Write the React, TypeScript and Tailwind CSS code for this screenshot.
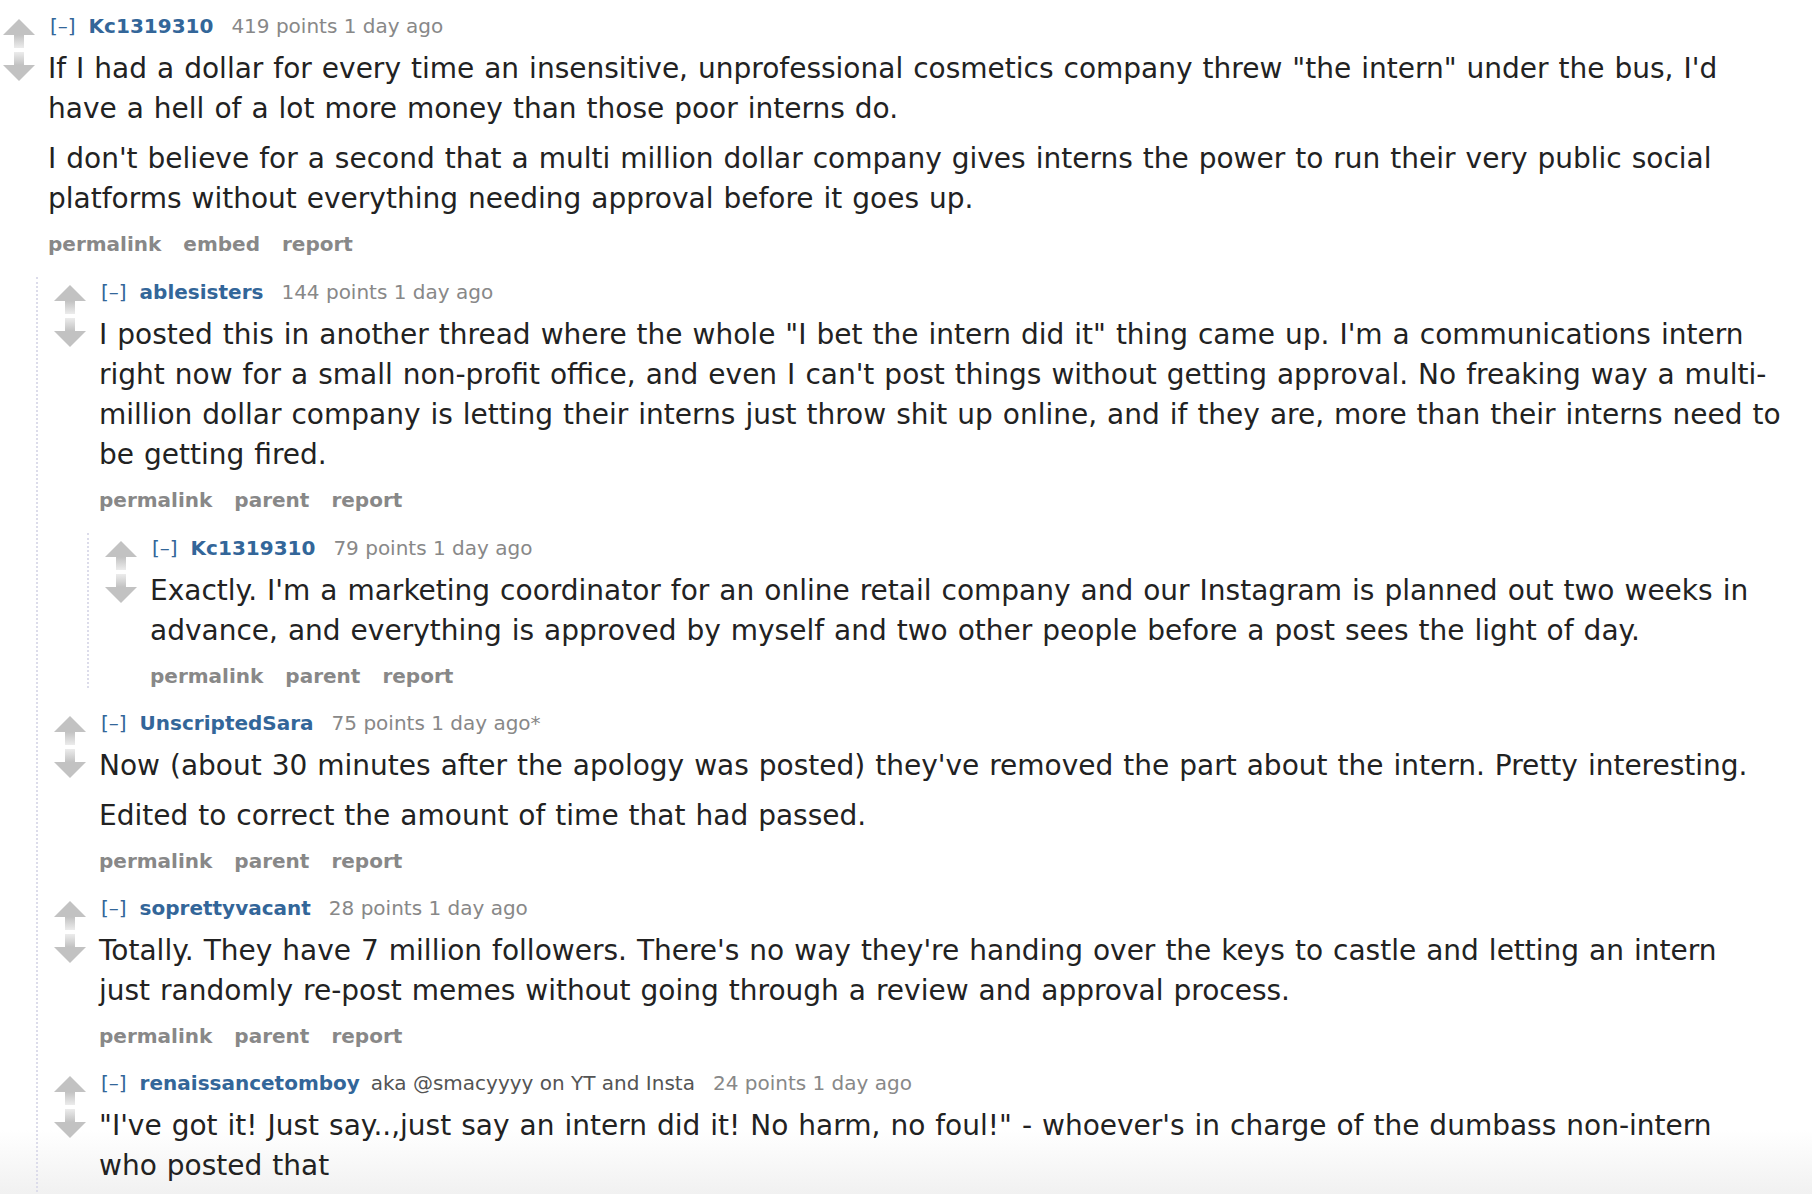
import React from "react";

type Comment = {
  author: string;
  flair?: string;
  points: string;
  edited?: boolean;
  // each paragraph is a list of lines, broken where the original wraps
  body: string[][];
  actions: string[];
  children?: Comment[];
};

const thread: Comment = {
  author: "Kc1319310",
  points: "419 points",
  body: [
    [
      'If I had a dollar for every time an insensitive, unprofessional cosmetics company threw "the intern" under the bus, I\'d',
      "have a hell of a lot more money than those poor interns do.",
    ],
    [
      "I don't believe for a second that a multi million dollar company gives interns the power to run their very public social",
      "platforms without everything needing approval before it goes up.",
    ],
  ],
  actions: ["permalink", "embed", "report"],
  children: [
    {
      author: "ablesisters",
      points: "144 points",
      body: [
        [
          'I posted this in another thread where the whole "I bet the intern did it" thing came up. I\'m a communications intern',
          "right now for a small non-profit office, and even I can't post things without getting approval. No freaking way a multi-",
          "million dollar company is letting their interns just throw shit up online, and if they are, more than their interns need to",
          "be getting fired.",
        ],
      ],
      actions: ["permalink", "parent", "report"],
      children: [
        {
          author: "Kc1319310",
          points: "79 points",
          body: [
            [
              "Exactly. I'm a marketing coordinator for an online retail company and our Instagram is planned out two weeks in",
              "advance, and everything is approved by myself and two other people before a post sees the light of day.",
            ],
          ],
          actions: ["permalink", "parent", "report"],
        },
      ],
    },
    {
      author: "UnscriptedSara",
      points: "75 points",
      edited: true,
      body: [
        ["Now (about 30 minutes after the apology was posted) they've removed the part about the intern. Pretty interesting."],
        ["Edited to correct the amount of time that had passed."],
      ],
      actions: ["permalink", "parent", "report"],
    },
    {
      author: "soprettyvacant",
      points: "28 points",
      body: [
        [
          "Totally. They have 7 million followers. There's no way they're handing over the keys to castle and letting an intern",
          "just randomly re-post memes without going through a review and approval process.",
        ],
      ],
      actions: ["permalink", "parent", "report"],
    },
    {
      author: "renaissancetomboy",
      flair: "aka @smacyyyy on YT and Insta",
      points: "24 points",
      body: [
        [
          '"I\'ve got it! Just say..,just say an intern did it! No harm, no foul!" - whoever\'s in charge of the dumbass non-intern',
          "who posted that",
        ],
      ],
      actions: [],
    },
  ],
};

function VoteArrows() {
  return (
    <div className="flex flex-col items-center gap-[4px]">
      <svg width="32" height="29" viewBox="0 0 32 29" aria-hidden="true">
        <defs>
          <linearGradient id="stemUp" x1="0" y1="0" x2="0" y2="1">
            <stop offset="0" stopColor="#c2c2c2" />
            <stop offset="1" stopColor="#ececec" />
          </linearGradient>
        </defs>
        <polygon points="16,0 0,16 32,16" fill="#c2c2c2" />
        <rect x="11" y="16" width="10" height="13" fill="url(#stemUp)" />
      </svg>
      <svg width="32" height="29" viewBox="0 0 32 29" aria-hidden="true">
        <defs>
          <linearGradient id="stemDown" x1="0" y1="0" x2="0" y2="1">
            <stop offset="0" stopColor="#ececec" />
            <stop offset="1" stopColor="#c2c2c2" />
          </linearGradient>
        </defs>
        <rect x="11" y="0" width="10" height="13" fill="url(#stemDown)" />
        <polygon points="0,13 32,13 16,29" fill="#c2c2c2" />
      </svg>
    </div>
  );
}

function CommentView({ c }: { c: Comment }) {
  return (
    <div className="pt-[3px]">
      <div className="flex">
        <div className="w-[38px] shrink-0 flex justify-center pt-[5px]">
          <VoteArrows />
        </div>
        <div className="min-w-0 flex-1 pl-[10px]">
          <p className="pl-[2px] text-[20px] leading-[24px] whitespace-nowrap">
            <span className="mr-[13px] text-[#369]">[–]</span>
            <span className="font-bold text-[#369]">{c.author}</span>
            {c.flair && <span className="ml-[11px] text-[#545454]">{c.flair}</span>}
            <span className="ml-[18px] text-[#888]">
              {c.points} 1 day ago{c.edited ? "*" : ""}
            </span>
          </p>
          <div className="max-w-[1680px] pt-[1px] text-[28px] leading-[40px] text-[#222] whitespace-nowrap [word-spacing:1.1px]">
            {c.body.map((para, i) => (
              <p key={i} className="my-[10px]">
                {para.map((line, j) => (
                  <React.Fragment key={j}>
                    {j > 0 && <br />}
                    {line}
                  </React.Fragment>
                ))}
              </p>
            ))}
          </div>
          {c.actions.length > 0 && (
            <ul className="mt-[13px] flex gap-[22px] text-[20px] leading-[24px] font-bold text-[#888]">
              {c.actions.map((a) => (
                <li key={a}>{a}</li>
              ))}
            </ul>
          )}
        </div>
      </div>
      {c.children && (
        <div className="ml-[36px] mt-[21px] flex flex-col gap-[20px] border-l-2 border-dotted border-[#dcdcea] pl-[13px]">
          {c.children.map((ch, i) => (
            <CommentView key={i} c={ch} />
          ))}
        </div>
      )}
    </div>
  );
}

export default function App() {
  return (
    <div
      className="h-[1194px] w-[1812px] overflow-hidden bg-[linear-gradient(to_bottom,#ffffff_1130px,#f1f1f1_1194px)] pt-[11px]"
      style={{ fontFamily: 'Verdana, "DejaVu Sans", sans-serif' }}
    >
      <CommentView c={thread} />
    </div>
  );
}
